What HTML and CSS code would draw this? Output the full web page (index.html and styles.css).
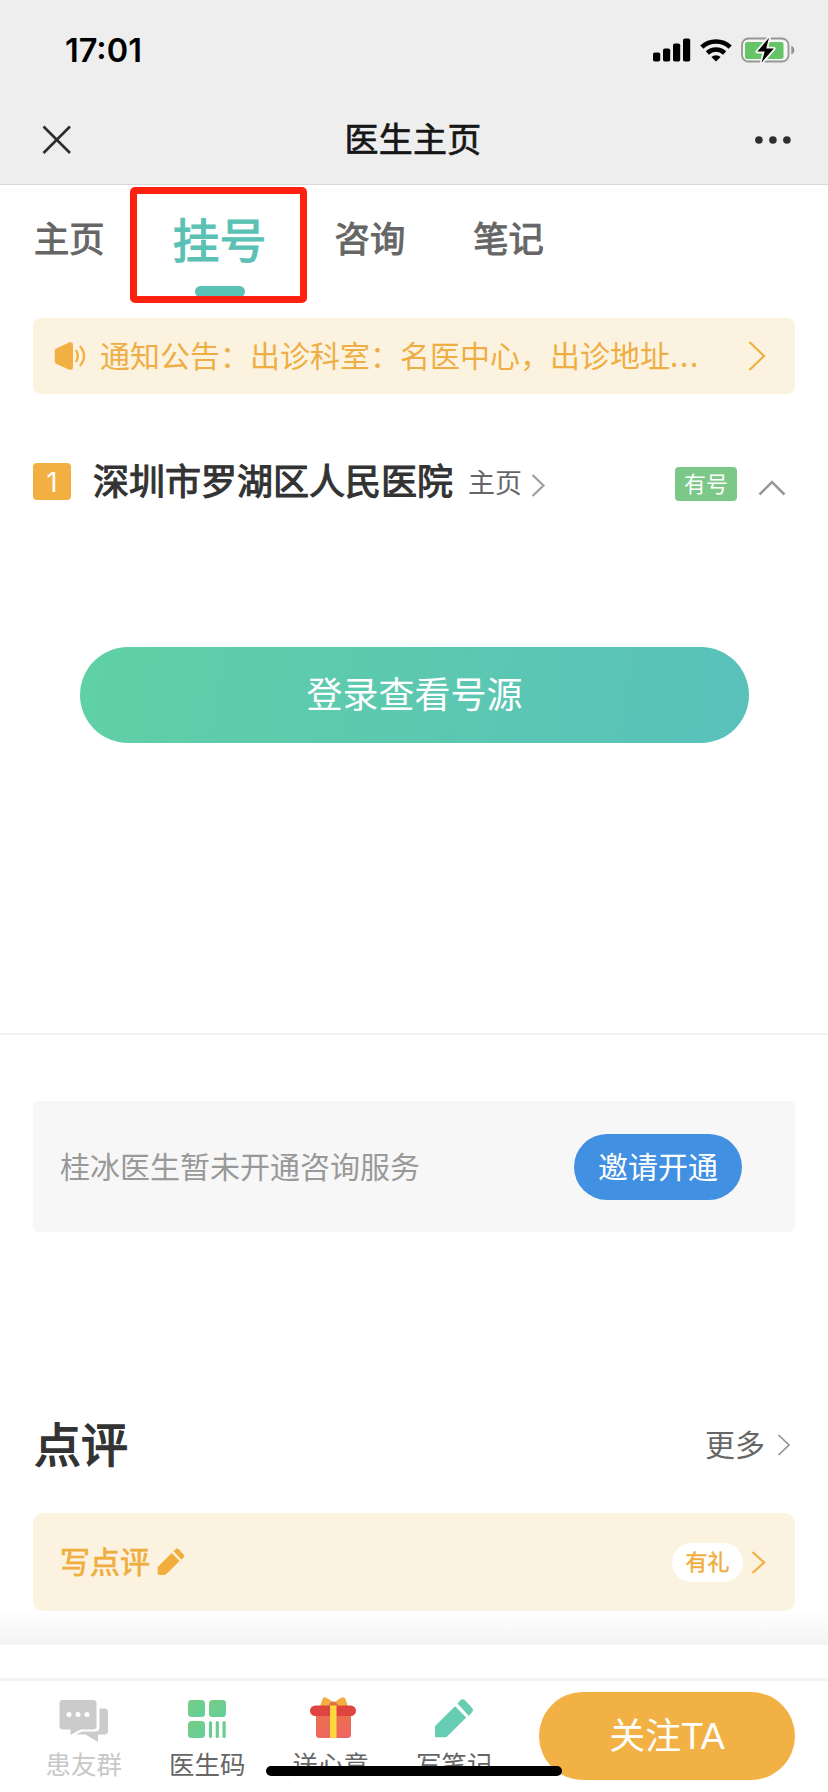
FILE: index.html
```html
<!DOCTYPE html>
<html lang="zh-CN">
<head>
<meta charset="utf-8">
<title>医生主页</title>
<link rel="stylesheet" href="styles.css">
</head>
<body>
<div class="screen">
  <header class="header">
    <div class="status">
      <span class="clock">17:01</span>
      <div class="status-icons">
        <svg class="signal" width="38" height="24" viewBox="0 0 38 24"><rect x="0" y="14.5" width="7.2" height="9" rx="1.8"/><rect x="10" y="10.5" width="7.2" height="13" rx="1.8"/><rect x="20" y="5.5" width="7.2" height="18" rx="1.8"/><rect x="30" y="0.5" width="7.2" height="23" rx="1.8"/></svg>
        <svg class="wifi" width="32" height="24" viewBox="0 0 32 24"><g fill="none" stroke="#000" stroke-width="4.6"><path d="M1.8 9.2A20.5 20.5 0 0 1 30.2 9.2"/><path d="M7.4 15A12.4 12.4 0 0 1 24.6 15"/></g><path d="M16 23.6L11.4 19A6.6 6.6 0 0 1 20.6 19Z"/></svg>
        <svg class="battery" width="54" height="28" viewBox="0 0 54 28"><rect x="1" y="2.5" width="46.5" height="23" rx="6.5" fill="#f4f5f4" stroke="#949896" stroke-width="1.8"/><rect x="4" y="6" width="38.5" height="17" rx="2.5" fill="#64c466"/><path d="M50.3 9.8c4 1.5 4 7.4 0 8.6z" fill="#8d918f"/><path d="M28 1.8L16.3 15.6h7.4L20.5 26.7 32.8 12.5h-7.6z" fill="#000" stroke="#f4f5f4" stroke-width="3.6" stroke-linejoin="round" paint-order="stroke"/></svg>
      </div>
    </div>
    <div class="navbar">
      <svg class="close" width="30" height="30" viewBox="0 0 30 30"><path d="M1.5 1.5L28 28M28 1.5L1.5 28" fill="none" stroke="#2c2c2c" stroke-width="2.6"/></svg>
      <h1 class="page-title">医生主页</h1>
      <svg class="dots" width="36" height="8" viewBox="0 0 36 8"><g fill="#2e2e2e"><circle cx="3.9" cy="4" r="3.8"/><circle cx="17.9" cy="4" r="3.8"/><circle cx="31.9" cy="4" r="3.8"/></g></svg>
    </div>
  </header>

  <nav class="tabs">
    <a class="tab">主页</a>
    <a class="tab tab-active">挂号</a>
    <a class="tab">咨询</a>
    <a class="tab">笔记</a>
  </nav>

  <div class="notice">
    <svg class="speaker" width="34" height="30" viewBox="0 0 34 30"><path d="M3 7.2L15.5 1.3Q19 .5 19 3.5V26.500Q19 29.500 15.500 28.700L3 23.200Q.8 23 .8 20.500V9.600Q.8 7.400 3 7.200Z" fill="#f2b043"/><path d="M22 9q3.600 6 0 12M25.800 5q8.500 9.800 0 20" fill="none" stroke="#f2b043" stroke-width="2.300"/></svg>
    <span class="notice-text">通知公告：出诊科室：名医中心，出诊地址<span class="ellipsis">...</span></span>
    <svg width="18" height="30" viewBox="0 0 18 30"><path d="M1.500 1L16 15 1.500 29" fill="none" stroke="#f0af45" stroke-width="2.300"/></svg>
  </div>

  <section class="hospital">
    <span class="index">1</span>
    <h2 class="hospital-name">深圳市罗湖区人民医院</h2>
    <a class="hospital-link">主页</a>
    <svg class="link-arrow" width="14" height="23" viewBox="0 0 14 23"><path d="M1.500 1L12.500 11.500 1.500 22" fill="none" stroke="#a0a0a0" stroke-width="2.300"/></svg>
    <span class="available">有号</span>
    <svg class="collapse" width="28" height="16" viewBox="0 0 28 16"><path d="M1.500 14.500L14 2 26.500 14.500" fill="none" stroke="#999" stroke-width="2.600"/></svg>
  </section>

  <button class="login">登录查看号源</button>

  <section class="consult">
    <div class="consult-card">
      <span>桂冰医生暂未开通咨询服务</span>
      <button class="invite">邀请开通</button>
    </div>
  </section>

  <section class="reviews">
    <div class="reviews-head">
      <h2 class="reviews-title">点评</h2>
      <a class="more">更多</a>
      <svg width="14" height="22" viewBox="0 0 14 22"><path d="M1.500 1L12 11 1.500 21" fill="none" stroke="#929292" stroke-width="1.700"/></svg>
    </div>
    <div class="write">
      <span class="write-text">写点评</span>
      <svg class="write-pen" width="28" height="28" viewBox="0 0 39 39"><path d="M1 26.500L20.500 7 31.500 18 13.500 36Q12.500 37.500 10 37.500H3Q1 37.500 1 35.500ZM23 4.500L26 1.500Q28 0 30 1.500L37 9Q39 11 37.500 13L34 16.500Z" fill="#f2ae3d"/></svg>
      <span class="gift-pill">有礼</span>
      <svg width="15" height="23" viewBox="0 0 15 23"><path d="M1.500 1L13 11.500 1.500 22" fill="none" stroke="#f2b043" stroke-width="2.300"/></svg>
    </div>
  </section>
  <div class="fade"></div>

  <footer class="bottom">
    <a class="action muted">
      <svg width="50" height="44" viewBox="0 0 50 44"><path d="M4 1H34Q37.500 1 37.500 4.500V27Q37.500 30.500 34 30.500H21.500L11.500 36V30.500H4Q.5 30.500 .5 27V4.500Q.5 1 4 1ZM40.500 9.500H45.500Q49 9.500 49 13V32Q49 35.500 45.500 35.500H39V43L26.500 35.500H17L23 32.500H36Q40.500 32.500 40.500 28Z" fill="#cbcbcb"/><g fill="#fff"><circle cx="10" cy="15.500" r="2.500"/><circle cx="19" cy="15.500" r="2.500"/><circle cx="28" cy="15.500" r="2.500"/></g></svg>
      <span>患友群</span>
    </a>
    <a class="action">
      <svg width="40" height="44" viewBox="0 0 40 44"><defs><linearGradient id="qr" x1="0" y1="0" x2="1" y2="1"><stop offset="0" stop-color="#78cc83"/><stop offset="1" stop-color="#61d19b"/></linearGradient></defs><g fill="#68ce90"><rect x="1" y="1" width="17" height="17" rx="3.500" fill="url(#qr)"/><rect x="22" y="1" width="17" height="17" rx="3.500" fill="url(#qr)"/><rect x="1" y="22" width="17" height="17" rx="3.500" fill="url(#qr)"/><rect x="22" y="22" width="3" height="17" rx="1.500"/><rect x="28.700" y="22" width="3.200" height="17" rx="1.500"/><rect x="35.500" y="22" width="3.200" height="17" rx="1.500"/></g></svg>
      <span>医生码</span>
    </a>
    <a class="action">
      <svg class="gift" width="48" height="44" viewBox="0 0 48 44"><defs><linearGradient id="box" x1="0" y1="0" x2="0" y2="1"><stop offset="0" stop-color="#e9724a"/><stop offset="1" stop-color="#ef6562"/></linearGradient></defs><path d="M11 7.500L13.500 0Q14.500-3 17.500-1.200L25 3.500 31.500-1Q35-3 36.500 0L39 7.500Z" fill="#f2ad43"/><rect x="7" y="12" width="35" height="27" rx="3.500" fill="url(#box)"/><rect x="1" y="6.500" width="46" height="10.500" rx="5.250" fill="#df4440"/><path d="M20 5.500Q24-.5 29 5.500V7H20Z" fill="#df7040"/><rect x="21" y="6.500" width="6.500" height="32.500" fill="#ffd83e"/></svg>
      <span>送心意</span>
    </a>
    <a class="action">
      <svg width="40" height="44" viewBox="0 0 39 43"><path d="M1 26.500L20.500 7 31.500 18 13.500 36Q12.500 37.500 10 37.500H1ZM23 4.500L26 1Q28-.6 30 1L37 8.500Q39 10.500 37.500 12.500L34 16.500Z" fill="#67cdb2"/></svg>
      <span>写笔记</span>
    </a>
    <button class="follow">关注<span class="latin">TA</span></button>
  </footer>
  <div class="home-indicator"></div>
  <div class="highlight"></div>
</div>
</body>
</html>
```
FILE: styles.css
```css
* { box-sizing: border-box; }
body { margin: 0; background: #fff; font-family: "Noto Sans CJK SC", sans-serif; color: #333; }
h1, h2 { margin: 0; font-weight: 400; }
button { border: 0; padding: 0; font-family: inherit; color: #fff; }
svg { display: block; flex: none; overflow: visible; }
span, a, h1, h2 { white-space: nowrap; }
.screen { position: relative; width: 828px; height: 1792px; overflow: hidden; display: flex; flex-direction: column; }

.header { height: 185px; flex: none; background: #eee; border-bottom: 1px solid #d9d9d9; }
.status { height: 98px; display: flex; align-items: center; justify-content: space-between; padding: 2px 33px 0 65px; }
.clock { font: 600 32.500px/40px Inter, sans-serif; color: #000; padding-top: 1px; }
.status-icons { display: flex; align-items: center; gap: 9px; }
.navbar { height: 86px; display: flex; align-items: center; justify-content: space-between; padding: 0 37px 2px 42px; }
.page-title { font-size: 34px; line-height: 50px; letter-spacing: .3px; color: #161616; -webkit-text-stroke: .7px #161616; padding: 0 1px 4px 0; }

.tabs { height: 133px; flex: none; display: flex; align-items: center; gap: 68px; padding: 0 34px 29px; }
.tab { font-size: 35.300px; line-height: 52px; color: #666; -webkit-text-stroke: 1px #666; }
.tab-active { position: relative; padding-top: 2px; font-size: 47px; line-height: 70px; color: #5bc1b5; -webkit-text-stroke: 1.200px #5bc1b5; }
.tab-active::after { content: ""; position: absolute; left: 22px; top: 85px; width: 50px; height: 11px; border-radius: 6px; background: #5bc1b5; }
.highlight { position: absolute; left: 130px; top: 187px; width: 177px; height: 116px; border: 7px solid #ff2010; border-radius: 5px; }

.notice { height: 76px; flex: none; margin: 0 33px; padding: 0 29px 0 21px; display: flex; align-items: center; background: #fbf3e0; border-radius: 8px; color: #efae43; }
.notice-text { flex: 1; margin-left: 12px; font-size: 30px; line-height: 44px; padding-bottom: 5px; }
.ellipsis { letter-spacing: 1.600px; }

.hospital { height: 60px; flex: none; margin: 57px 33px 0; display: flex; align-items: center; padding-right: 9px; }
.index { width: 38px; height: 37px; border-radius: 4px; background: #f2b043; color: #fff; text-align: center; font: 27px/39px Inter, sans-serif; }
.hospital-name { margin-left: 22px; font-size: 36px; line-height: 50px; color: #333; -webkit-text-stroke: 1.100px #333; padding-bottom: 5px; }
.hospital-link { margin-left: 15px; font-size: 27px; line-height: 40px; color: #666; padding-top: 2px; }
.link-arrow { margin: 8px 0 0 9px; }
.available { margin: 5px 21px 0 auto; width: 62px; height: 34px; border-radius: 4px; background: #7bc888; color: #fff; font-size: 22px; line-height: 31px; text-align: center; }
.collapse { margin-top: 13px; }

.login { width: 669px; height: 96px; flex: none; margin: 136px 0 0 80px; border-radius: 48px; background: linear-gradient(100deg, #60d0a5, #59c1bb); font-size: 36px; line-height: 90px; padding-bottom: 6px; }

.consult { margin-top: 290px; border-top: 2px solid #f3f3f3; padding: 66px 33px 0; flex: none; }
.consult-card { height: 131px; border-radius: 5px; background: #f7f7f7; display: flex; align-items: center; justify-content: space-between; padding: 0 53px 0 27px; font-size: 30px; line-height: 44px; color: #999; }
.consult-card span { padding-bottom: 4px; }
.invite { width: 168px; height: 66px; border-radius: 33px; background: #4190e2; font-size: 30px; line-height: 62px; padding-bottom: 4px; }

.reviews { padding: 178px 33px 0; flex: none; }
.reviews-head { height: 70px; display: flex; align-items: center; padding-right: 4px; }
.reviews-title { font-size: 47px; line-height: 70px; color: #333; -webkit-text-stroke: 1.500px #333; padding-left: 1px; padding-bottom: 6px; }
.more { margin: 0 12px 5px auto; font-size: 30px; line-height: 44px; color: #666; }
.write { height: 98px; margin-top: 33px; display: flex; align-items: center; padding: 0 29px 0 27px; background: #fbf3e0; border-radius: 10px; color: #f0ad40; }
.write-text { font-size: 30px; line-height: 44px; -webkit-text-stroke: .7px #f0ad40; padding-bottom: 5px; }
.write-pen { margin-left: 7px; }
.gift-pill { margin: 0 8px 0 auto; width: 71px; height: 39px; border-radius: 20px; background: #fff; font-size: 22px; line-height: 34px; text-align: center; -webkit-text-stroke: .5px #f0ad40; }
.fade { height: 34px; flex: none; background: linear-gradient(#fff, #f3f3f3); }

.bottom { height: 114px; flex: none; margin-top: 33px; border-top: 3px solid #f4f4f4; display: flex; padding: 18px 33px 0 22px; }
.action { width: 123.500px; display: flex; flex-direction: column; align-items: center; font-size: 25.500px; line-height: 36px; color: #666; }
.action span { margin-top: 2px; }
.gift { margin-left: 4px; }
.muted { color: #c8c8c8; }
.follow { width: 256px; height: 88px; margin: -7px 0 0 auto; border-radius: 44px; background: #f2b144; font-size: 36px; line-height: 82px; padding-bottom: 6px; }
.latin { font-family: "Liberation Sans", sans-serif; font-size: 36px; }
.home-indicator { position: absolute; left: 266px; top: 1766px; width: 296px; height: 10px; border-radius: 5px; background: #000; }
```
